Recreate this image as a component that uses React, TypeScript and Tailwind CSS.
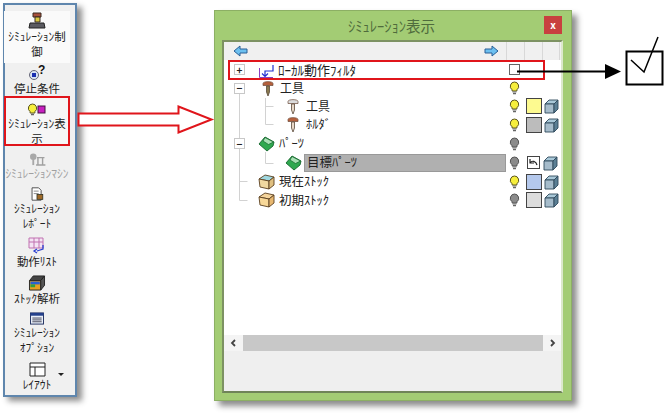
const font = "font-['Noto_Sans_CJK_JP','Liberation_Sans',sans-serif]";

const Bulb = ({ on = true }: { on?: boolean }) => (
  <svg width="11" height="14" viewBox="0 0 11 14" className="shrink-0">
    <path d="M5.500 1a4.300 4.300 0 0 0-2.400 7.800V10h4.800V8.800A4.300 4.300 0 0 0 5.500 1z" fill={on ? '#f6ee3c' : '#8b8b8b'} stroke={on ? '#5c5620' : '#555'} strokeWidth="1" />
    <path d="M3.600 11h3.800M4 12.600h3" stroke="#666" strokeWidth="1.200" />
  </svg>
);

const Cube = () => (
  <svg width="15" height="16" viewBox="0 0 15 16" className="shrink-0">
    <path d="M1 6l4-4h9l-4 4z" fill="#a9c8d8" stroke="#2f4a5c" strokeWidth="0.9" />
    <path d="M1 6h9v9H1z" fill="#a6bccb" stroke="#2f4a5c" strokeWidth="0.9" />
    <path d="M10 6l4-4v9l-4 4z" fill="#5b7f94" stroke="#2f4a5c" strokeWidth="0.9" />
  </svg>
);

const Swatch = ({ color }: { color: string }) => (
  <span className="w-[16px] h-[16px] border border-[#444] shrink-0" style={{ background: color }} />
);

const Screw = ({ head, shank }: { head: string; shank: string }) => (
  <svg width="12" height="17" viewBox="0 0 12 17" className="shrink-0">
    <path d="M1 3.500C1 1 11 1 11 3.500V5.500H1z" fill={head} stroke="#6b4a3a" strokeWidth="0.7" />
    <path d="M4.500 6h3v6l-1.500 4-1.500-4z" fill={shank} stroke="#5a4a3a" strokeWidth="0.8" />
  </svg>
);

const GreenPart = () => (
  <svg width="17" height="16" viewBox="0 0 17 16" className="shrink-0">
    <path d="M1 8l6-7 9 5-1 4-6 5z" fill="#2fa84f" stroke="#14662c" strokeWidth="0.9" />
    <path d="M7 1.500l8.500 4.500-5 2.500L5 5z" fill="#a8e0b4" stroke="#14662c" strokeWidth="0.7" />
  </svg>
);

const Stock = ({ top, front, side }: { top: string; front: string; side: string }) => (
  <svg width="17" height="16" viewBox="0 0 17 16" className="shrink-0">
    <path d="M1 5l6-4 9 2-5 4z" fill={top} stroke="#5a4020" strokeWidth="0.9" />
    <path d="M1 5l10 2v8L2 13z" fill={front} stroke="#5a4020" strokeWidth="0.9" />
    <path d="M11 7l5-4v8l-5 4z" fill={side} stroke="#5a4020" strokeWidth="0.9" />
  </svg>
);

const BlueArrow = ({ flip = false }: { flip?: boolean }) => (
  <svg width="15" height="12" viewBox="0 0 15 12" className={flip ? '' : '-scale-x-100'}>
    <path d="M1 4h7V1l6 5-6 5V8H1z" fill="#6cc0f0" stroke="#2a5f96" strokeWidth="1" />
  </svg>
);

const Expander = ({ plus = false }: { plus?: boolean }) => (
  <span className="w-[11px] h-[11px] border border-[#c8c8c8] bg-white flex items-center justify-center text-[10px] leading-none text-[#222] shrink-0 font-bold">
    {plus ? '+' : '−'}
  </span>
);

type SideItem = { icon: React.ReactNode; lines: string[]; h: string; active?: boolean; dim?: boolean; big?: boolean; pt: string };

const sideItems: SideItem[] = [
  {
    h: 'h-[52px]',
    pt: 'pt-0',
    lines: ['ｼﾐｭﾚｰｼｮﾝ制', '御'],
    icon: (
      <svg width="18" height="18" viewBox="0 0 18 18">
        <path d="M5 2h8v4H5z" fill="#a8503c" stroke="#3a2a20" />
        <path d="M7 6h5v5H7z" fill="#d8c840" stroke="#3a2a20" />
        <path d="M2 12h14l1 5H1z" fill="#5a5a60" stroke="#222" />
      </svg>
    ),
  },
  {
    h: 'h-[33px]',
    pt: 'pt-[1px]',
    big: true,
    lines: ['停止条件'],
    icon: (
      <svg width="18" height="17" viewBox="0 0 18 17">
        <circle cx="6" cy="11" r="4.500" fill="#d8e4f4" stroke="#667" />
        <rect x="4" y="9" width="4" height="4" fill="#1a2fb0" />
        <text x="10" y="10" fontSize="12" fontWeight="700" fill="#111" fontFamily="Liberation Sans">?</text>
      </svg>
    ),
  },
  {
    h: 'h-[50px]',
    pt: 'pt-[7px]',
    active: true,
    lines: ['ｼﾐｭﾚｰｼｮﾝ表', '示'],
    icon: (
      <svg width="20" height="13" viewBox="0 0 20 13">
        <path d="M5.500 1a4.200 4.200 0 0 0-2.400 7.600V10h4.800V8.600A4.200 4.200 0 0 0 5.500 1z" fill="#f6ee3c" stroke="#5c5620" />
        <path d="M4 11.500h3" stroke="#666" strokeWidth="1.500" />
        <rect x="11" y="3" width="7" height="7" fill="#c81fc0" stroke="#401040" />
      </svg>
    ),
  },
  {
    h: 'h-[35px]',
    pt: 'pt-[6px]',
    dim: true,
    big: true,
    lines: ['ｼﾐｭﾚｰｼｮﾝﾏｼﾝ'],
    icon: (
      <svg width="18" height="15" viewBox="0 0 18 15">
        <circle cx="5" cy="5" r="3.500" fill="#a8a8a8" />
        <path d="M4 8h2v6H4z" fill="#a8a8a8" />
        <path d="M9 6h8M10 6v8M15 6v8M8 14h10" stroke="#a0a0a0" strokeWidth="1.500" fill="none" />
      </svg>
    ),
  },
  {
    h: 'h-[50px]',
    pt: 'pt-[6px]',
    lines: ['ｼﾐｭﾚｰｼｮﾝ', 'ﾚﾎﾟｰﾄ'],
    icon: (
      <svg width="18" height="17" viewBox="0 0 18 17">
        <path d="M3 1h8l3 3v12H3z" fill="#fff" stroke="#333" />
        <path d="M5 5h6M5 8h6" stroke="#777" />
        <rect x="9" y="9" width="7" height="6" fill="#a06a28" stroke="#332" />
      </svg>
    ),
  },
  {
    h: 'h-[38px]',
    pt: 'pt-[6px]',
    big: true,
    lines: ['動作ﾘｽﾄ'],
    icon: (
      <svg width="18" height="17" viewBox="0 0 18 17">
        <path d="M1 1h14v10H1zM1 5h14M6 1v10M11 1v10" fill="#f4e4f4" stroke="#c070b0" />
        <path d="M15 8v4l-6 2M9 12l-3 2 3 2" fill="none" stroke="#2a3fd0" strokeWidth="1.300" />
      </svg>
    ),
  },
  {
    h: 'h-[37px]',
    pt: 'pt-[6px]',
    big: true,
    lines: ['ｽﾄｯｸ解析'],
    icon: (
      <svg width="18" height="17" viewBox="0 0 18 17">
        <path d="M1 6l4-5h12l-4 5z" fill="#444" stroke="#222" />
        <path d="M1 6h12v10H1z" fill="#e8a020" stroke="#222" />
        <path d="M2 7h10v3H2z" fill="#2a60d0" />
        <path d="M2 10h5v3H2z" fill="#30a040" />
        <path d="M13 6l4-5v10l-4 5z" fill="#555" stroke="#222" />
      </svg>
    ),
  },
  {
    h: 'h-[49px]',
    pt: 'pt-[6px]',
    lines: ['ｼﾐｭﾚｰｼｮﾝ', 'ｵﾌﾟｼｮﾝ'],
    icon: (
      <svg width="16" height="14" viewBox="0 0 16 14">
        <rect x="1" y="1" width="14" height="12" fill="#e8eef8" stroke="#1a2a5a" />
        <rect x="1" y="1" width="14" height="3" fill="#24408c" />
        <path d="M3 6.500h10M3 8.500h10M3 10.500h10" stroke="#445" />
      </svg>
    ),
  },
];

const rows = [
  { y: 'h-[19px]', exp: 'plus', indent: 'ml-[34px]', icon: (
    <svg width="17" height="18" viewBox="0 0 17 18" className="shrink-0">
      <path d="M1.500 7V16.500H15" fill="none" stroke="#8a3fc0" />
      <path d="M15 4V10H7V15.500M4 12.500l3 3 3-3" fill="none" stroke="#2030d0" strokeWidth="1.200" />
    </svg>
  ), text: 'ﾛｰｶﾙ動作ﾌｨﾙﾀ', textClass: 'text-[13px] ml-[3px]', right: 'check' },
  { y: 'h-[18px]', exp: 'minus', indent: 'ml-[38px]', icon: <Screw head="#b5603c" shank="#8a7a50" />, text: '工具', textClass: 'text-[12px] ml-[6px]', right: 'bulb' },
  { y: 'h-[18px]', indent: 'ml-[63px]', icon: <Screw head="#dcdcdc" shank="#e8d8c8" />, text: '工具', textClass: 'text-[12px] ml-[7px]', right: 'bulb', swatch: '#fdfa90', cube: 1 },
  { y: 'h-[19px]', indent: 'ml-[63px]', icon: <Screw head="#b5603c" shank="#e8d8c8" />, text: 'ﾎﾙﾀﾞ', textClass: 'text-[12.500px] ml-[7px]', right: 'bulb', swatch: '#bcbcbc', cube: 1 },
  { y: 'h-[19px]', exp: 'minus', indent: 'ml-[34px]', icon: <GreenPart />, text: 'ﾊﾟｰﾂ', textClass: 'text-[12.500px] ml-[4px]', right: 'off' },
  { y: 'h-[19px]', indent: 'ml-[61px]', icon: <GreenPart />, text: '目標ﾊﾟｰﾂ', selected: true, right: 'off', undo: 1, cube: 1 },
  { y: 'h-[19px]', indent: 'ml-[34px]', icon: <Stock top="#9fd8e0" front="#f0d8a0" side="#e0c080" />, text: '現在ｽﾄｯｸ', textClass: 'text-[12.500px] ml-[4px]', right: 'bulb', swatch: '#b4c8ec', cube: 1 },
  { y: 'h-[18px]', indent: 'ml-[34px]', icon: <Stock top="#f4d49c" front="#f8d898" side="#e8b870" />, text: '初期ｽﾄｯｸ', textClass: 'text-[12.500px] ml-[4px]', right: 'off', swatch: '#dcdcdc', cube: 1 },
] as const;

export default function App() {
  return (
    <div className={`relative w-[669px] h-[416px] bg-white overflow-hidden flex items-start text-[#222] ${font}`}>
      {/* left ribbon */}
      <div className="mt-[3px] ml-[3px] w-[74px] h-[394px] border-2 border-[#5f86ad] bg-[#f0f0f0] shadow-[5px_4px_6px_rgba(0,0,0,0.45)] flex flex-col shrink-0 pt-[6px]">
        {sideItems.map((item, i) => (
          <div
            key={i}
            className={`${item.h} ${item.pt} flex flex-col items-center justify-start w-[66px] -ml-[1px] ${i === 0 ? 'bg-[#fafafa]' : ''} ${item.active ? 'ring-2 ring-inset ring-[#e0151b] bg-[#f6f6f6]' : ''}`}
          >
            {item.icon}
            {item.lines.map((l) => (
              <span
                key={l}
                className={`${item.big ? 'text-[11.500px]' : 'text-[11.500px]'} leading-[15px] whitespace-nowrap ${item.dim ? 'text-[#a0a0a0]' : ''}`}
              >
                {l}
              </span>
            ))}
          </div>
        ))}
        <div className="relative w-[66px] -ml-[1px] pt-[7px] flex flex-col items-center">
          <svg width="17" height="15" viewBox="0 0 17 15">
            <path d="M1 1h15v13H1zM1 5h15M6 5v9" fill="#fff" stroke="#222" />
          </svg>
          <span className="text-[11.500px] leading-[15px]">ﾚｲｱｳﾄ</span>
          <span className="absolute left-[54px] top-[18px] border-x-[3px] border-x-transparent border-t-[3px] border-t-[#222]" />
        </div>
      </div>

      {/* dialog */}
      <div className="mt-[10px] ml-[137px] w-[358px] h-[391px] bg-[#a3cc74] border border-[#8caf64] shadow-[5px_5px_6px_rgba(0,0,0,0.45)] flex flex-col pl-[7px] pr-[8px] pb-[7px] shrink-0">
        <div className="h-[29px] shrink-0 flex items-center relative">
          <span className="flex-1 text-center text-[14.500px] text-[#4f6b3c] pr-[2px]">ｼﾐｭﾚｰｼｮﾝ表示</span>
          <span className="absolute right-[1px] top-[5px] w-[18px] h-[18px] bg-[#c8403f] flex items-center justify-center text-white text-[10px] font-bold leading-none">x</span>
        </div>
        <div className="flex-1 border-2 border-[#7d9263] border-r-[#dce8cc] border-b-[#6f8458] bg-white flex flex-col min-h-0">
          <div className="h-[18px] bg-[#f0f0f0] flex items-center shrink-0 pl-[9px]">
            <BlueArrow />
            <span className="ml-[236px]"><BlueArrow flip /></span>
            <span className="ml-[7px] w-[18px] h-[18px] border-l border-[#d8d8d8]" />
            <span className="w-[18px] h-[18px] border-l border-[#d8d8d8]" />
            <span className="w-[18px] h-[18px] border-x border-[#d8d8d8]" />
          </div>
          <div className="relative flex-1">
            {/* tree connector lines */}
            <svg className="absolute left-0 top-0" width="80" height="160" viewBox="0 0 80 160">
              <path d="M15.500 28V140.500M15.500 121.500h8M15.500 140.500h8M41.500 38V64.500M41.500 46.500h8M41.500 64.500h8M41.500 92V103.500h8" fill="none" stroke="#d2d2d2" />
            </svg>
            {rows.map((r, i) => (
              <div key={i} className={`relative ${r.y} flex items-center pr-[4px]`}>
                {'exp' in r && r.exp ? (
                  <span className="ml-[10px] mr-[-21px]"><Expander plus={r.exp === 'plus'} /></span>
                ) : null}
                <span className={`${r.indent} flex items-center min-w-0`}>
                  {r.icon}
                  {'selected' in r ? (
                    <span className="ml-[2px] w-[202px] h-[18px] bg-[#b0b0b0] border border-[#999] flex items-center text-[12.500px] pl-[2px] whitespace-nowrap">
                      {r.text}
                    </span>
                  ) : (
                    <span className={`${r.textClass} whitespace-nowrap`}>{r.text}</span>
                  )}
                </span>
                <span className="absolute left-[285px] top-0 h-full flex items-center gap-[6px]">
                  {r.right === 'check' ? (
                    <span className="w-[11px] h-[11px] border-[1.500px] border-[#666] bg-white" />
                  ) : (
                    <Bulb on={r.right === 'bulb'} />
                  )}
                  {'swatch' in r && r.swatch ? <Swatch color={r.swatch} /> : null}
                  {'undo' in r ? (
                    <span className="w-[13px] h-[13px] border border-[#444] flex items-center justify-center mx-[1px]">
                      <svg width="9" height="9" viewBox="0 0 9 9">
                        <path d="M1 1v4h4M1 5c2-3 6-2 7 2" fill="none" stroke="#222" strokeWidth="1.200" />
                      </svg>
                    </span>
                  ) : null}
                  {'cube' in r ? <span className="-ml-[4px]"><Cube /></span> : null}
                </span>
              </div>
            ))}
          </div>
          <div className="h-[16px] flex items-center shrink-0 bg-[#f4f4f4] text-[#444]">
            <svg width="19" height="16" viewBox="0 0 19 16" className="shrink-0">
              <path d="M11 5l-3 3 3 3" fill="none" stroke="#444" strokeWidth="1.800" />
            </svg>
            <div className="flex-1 h-full bg-[#c8c8c8]" />
            <svg width="18" height="16" viewBox="0 0 18 16" className="shrink-0">
              <path d="M8 5l3 3-3 3" fill="none" stroke="#444" strokeWidth="1.800" />
            </svg>
          </div>
          <div className="h-[40px] bg-[#efefef] shrink-0" />
        </div>
      </div>

      {/* annotations over the screenshot */}
      <svg className="absolute left-[70px] top-[90px]" width="150" height="60" viewBox="0 0 150 60">
        <path d="M8.500 23.500h100v-7l33 13-33 13v-7h-100z" fill="#fff" stroke="#e0151b" strokeWidth="2" />
      </svg>
      <div className="absolute left-[228px] top-[60px] w-[317px] h-[20px] border-2 border-[#e0151b]" />
      <svg className="absolute left-[510px] top-[30px]" width="159" height="65" viewBox="0 0 159 65">
        <path d="M7 41.500h90" stroke="#000" strokeWidth="2" />
        <path d="M95 34l16 7.500-16 7.500z" fill="#000" />
        <rect x="116.500" y="21.500" width="36" height="33" fill="#fff" stroke="#000" strokeWidth="2" />
        <path d="M121 30l13 12 14-35" fill="none" stroke="#000" strokeWidth="1.500" />
      </svg>
    </div>
  );
}
